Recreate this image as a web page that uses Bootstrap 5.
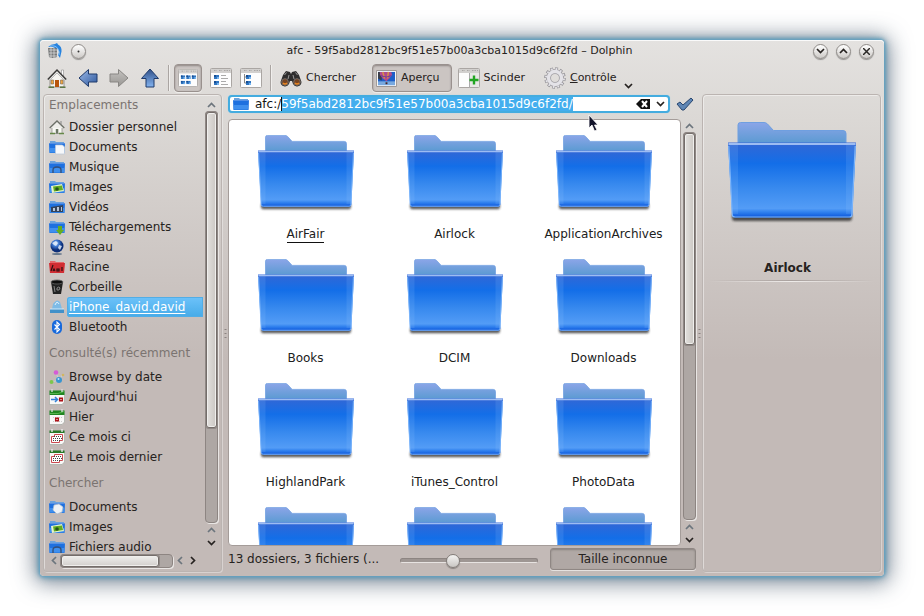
<!DOCTYPE html>
<html lang="fr">
<head>
<meta charset="utf-8">
<meta name="viewport" content="width=device-width, initial-scale=1">
<title>afc - 59f5abd2812bc9f51e57b00a3cba1015d9c6f2fd – Dolphin</title>
<link href="https://cdn.jsdelivr.net/npm/bootstrap@5.3.0/dist/css/bootstrap.min.css" rel="stylesheet">
<style>
:root{--ink:#262220;--soft:#7b7471}
body{font-family:"DejaVu Sans",sans-serif;font-size:12px;line-height:20px;color:var(--ink);background:#fff}
button{font:inherit;color:inherit;background:none;border:0;padding:0}
svg{display:block;flex:none}
.desk{padding:40px}
.win{background:linear-gradient(#e4e2e0,#dbd8d5 80px,#c3bab7 320px);border-radius:4px;padding:0 3px 4px;
 box-shadow:inset 0 1px #fafafa,0 0 3px 1px #62a4c4,0 0 7px 1px rgba(60,130,165,.8),0 2px 22px 5px rgba(45,65,85,.62)}
.stage{flex:1 1 0;min-height:0}
.center{flex:1 1 0;min-width:0}
.titlebar{height:22px;padding:0 7px 0 4px;flex:none;gap:8px}
.orb{width:15px;height:15px;border-radius:50%;border:1px solid #8f8b88;background:linear-gradient(#fff,#cdcac7);box-shadow:0 1px 1px rgba(0,0,0,.35)}
.orb svg{margin:auto}
.caption{font-size:11px;padding-left:20px}
.tools{height:32px;font-size:11px;padding-left:4px;flex:none}
.moves{gap:11px}
.tool{height:28px;border:1px solid transparent;border-radius:4px;padding:0 3px;gap:4px}
.tool.on{background:#cbc5c2;border-color:#99918e;box-shadow:inset 0 1px 2px #8f8784,0 1px #efedeb}
.tool.preview{padding-right:11px;margin:0 2px 0 12px}
.tool.control{margin-left:11px}
.more{margin:0 0 2px 4px}
.split{width:2px;height:26px;border-left:1px solid #aaa5a2;border-right:1px solid #f0eeec;margin:0 4px}
.pane{border:1px solid #bbb4b1;border-radius:4px;box-shadow:inset 1px 1px rgba(255,255,255,.45),1px 1px rgba(255,255,255,.35);flex:none;width:179px}
.grip{width:6px;flex:none;color:#8b8481}
.head{color:var(--soft);font-size:12px;font-weight:400;line-height:20px;padding:6px 0 4px;margin:0}
.head.first{padding:0 0 2px}
.place{height:20px;color:inherit;text-decoration:none;white-space:nowrap}
.place span{flex:1;padding-left:2px;margin-left:2px}
.place.on span{color:#fff;text-decoration:underline;text-underline-offset:2px;background:linear-gradient(#6dc2fa,#46abe8);box-shadow:inset 0 0 0 1px #52ade5;border-radius:3px 0 0 3px}
.listing{padding-left:5px}
.vbar{width:13px;flex:none;margin-left:2px}
.vbar.inset{padding:3px 0 4px;margin-right:3px}
.vbar button,.hbar button{width:13px;height:13px;display:grid;place-items:center}
.groove{background:#aea7a4;border:1px solid #8d8582;border-radius:4px;box-shadow:1px 1px #e9e6e4}
.thumb{background:#dcd9d6;border:1px solid #746d6a;border-radius:3px;box-shadow:inset 0 0 0 1px #f0efed,0 0 0 1px #8f8885}
.vbar .thumb{background:linear-gradient(90deg,#e2e0dd,#cbc7c3)}
.hbar .thumb{background:linear-gradient(#efeeec,#d2cfcc)}
.tall{height:77%}.mid{height:55%}.wide{width:88%}
.hbar{height:18px;padding:0 22px 3px 3px}
.hbar .groove{height:14px}
.where{gap:6px;padding:1px 2px 6px 0}
.address{height:18px;background:#fff;border:2px solid #44acdf;border-radius:4px;box-shadow:0 0 1px #81cdf0;padding:0 3px;gap:6px}
.address input{font:inherit;color:#151515;border:0;outline:0;background:none;padding:0;height:14px;line-height:14px;width:100%}
.address input::selection{background:#43aeee;color:#fff}
.view{background:#fff;border:1px solid #a49c99;border-radius:4px;overflow:hidden}
.files{display:grid;grid-template-columns:repeat(3,1fr);grid-auto-rows:124px;padding:15px 2px 0}
.file{display:flex;flex-direction:column;align-items:center;color:#202020;text-decoration:none;gap:14px}
.file span{border-bottom:1px solid transparent;line-height:15px}
.file.cur span{border-color:#111}
.status{height:26px;gap:12px;flex:none}
.status output{width:160px;flex:none}
.zoomer{appearance:none;background:none;flex:1;min-width:0;height:16px;margin:2px 0 0}
.zoomer::-webkit-slider-runnable-track{height:5px;border-radius:3px;background:#9e9693;border:1px solid #8d8582;border-bottom-color:#e7e3e1}
.zoomer::-webkit-slider-thumb{appearance:none;width:14px;height:14px;margin-top:-5px;border-radius:50%;border:1px solid #827c79;background:linear-gradient(#f4f3f2,#c9c6c3);box-shadow:0 1px 1px rgba(0,0,0,.3)}
.space{width:146px;height:22px;flex:none;background:#b0a8a5;border:1px solid #8f8784;border-radius:3px;box-shadow:inset 0 1px 2px #8a827f,0 1px #e5e1df}
.details{padding-top:27px}
.details h1{font-size:12px;line-height:20px;font-weight:700;margin:32px 0 2px;padding-right:8px}
.rule{height:2px;border:0;margin:0 6px;opacity:1;background:linear-gradient(90deg,transparent,#eeebe9 50%,transparent) bottom/100% 1px no-repeat,linear-gradient(90deg,transparent,#aaa29f 50%,transparent) top/100% 1px no-repeat}
.caret{position:absolute;left:51px;top:0;width:1px;height:14px;background:#111}
.pointer{position:absolute;left:588px;top:114px}
</style>
<script src="https://cdn.jsdelivr.net/npm/bootstrap@5.3.0/dist/js/bootstrap.bundle.min.js"></script>
</head>
<body>
<svg width="0" height="0" class="position-absolute" aria-hidden="true">
<defs>
<linearGradient id="gf" x2="0" y2="1"><stop stop-color="#3a6ad8"/><stop offset=".05" stop-color="#2d68d8"/><stop offset=".28" stop-color="#136ee8"/><stop offset=".6" stop-color="#3789ee"/><stop offset=".88" stop-color="#539cf6"/><stop offset=".93" stop-color="#2f80ee"/><stop offset="1" stop-color="#0b55da"/></linearGradient>
<linearGradient id="gb" x2="0" y2="1"><stop stop-color="#8ba5e8"/><stop offset="1" stop-color="#5599cf"/></linearGradient>
<linearGradient id="ga" x2="0" y2="1"><stop stop-color="#2f4f88"/><stop offset="1" stop-color="#84b4f0"/></linearGradient>
<linearGradient id="gh" x2="1" y2="1"><stop stop-color="#9dbbe8"/><stop offset="1" stop-color="#2c569c"/></linearGradient>
<linearGradient id="gg" x2="0" y2="1"><stop stop-color="#c4c2bf"/><stop offset="1" stop-color="#989693"/></linearGradient>
<radialGradient id="globe" cx=".4" cy=".3"><stop stop-color="#b9d8fa"/><stop offset=".5" stop-color="#3a74cc"/><stop offset="1" stop-color="#0c2e78"/></radialGradient>
<filter id="blur" x="-10%" y="-100%" width="120%" height="300%"><feGaussianBlur stdDeviation="1.3"/></filter>
<symbol id="folder" viewBox="0 0 128 104">
 <rect x="4" y="91" width="120" height="8" rx="3" fill="#222" opacity=".75" filter="url(#blur)"/>
 <path d="M10 24V3q0-2.500 2.500-2.500H36q2 0 3.500 1.500l6 6.500H115q3 0 3 3V24z" fill="url(#gb)" stroke="#6f9fe0"/>
 <path d="M0 20.500h128l-3.500 72q0 3-3 3H7q-3 0-3-3z" fill="url(#gf)"/>
 <path d="M1 21h9v71H5zM127 21h-9v71h5z" fill="#9cc9ff" opacity=".15"/>
 <path d="M.5 22h127" stroke="#9dbcf2" stroke-width="2"/><path d="M.8 24l3.500 69q0 2 3 2h114q2.500 0 2.500-2l3.400-69" fill="none" stroke="#7db5fa" stroke-width="1.200"/>
</symbol>
<symbol id="f16" viewBox="0 0 16 16"><path d="M1 5V2h5l1 1h8v3z" fill="#6ba2dc"/><path d="M0 4h16l-.5 10H.5z" fill="#1e70df"/><path d="M.5 9h15l-.3 4.500H.7z" fill="#3f8fee"/><path d="M0 4.500h16" stroke="#5690e4"/></symbol>
<symbol id="home" viewBox="0 0 20 20"><path d="M3 10h14v9H3z" fill="#f6f5f1" stroke="#77736e" stroke-width=".7"/><path d="M14.500 2h2v6h-2z" fill="#fff" stroke="#777" stroke-width=".5"/><path d="M.8 11.500 10 2 19.200 11.500" fill="#e8e8e5" stroke="#3a3938" stroke-width="1.500"/><path d="M3 12l7-7 7 7" fill="#f6f5f1" stroke="#bbb" stroke-width="1"/><path d="M8 12h4v7H8z" fill="#b8550d"/><path d="M4 12h2.500v4H4zM13.500 12H16v4h-2.500z" fill="#f0a640" stroke="#765" stroke-width=".6"/><path d="M1.500 19.300H7M13 19.300h5.500" stroke="#5c7746" stroke-width="1.400"/></symbol>
<symbol id="home2" viewBox="0 0 16 16"><path d="M3 8h10v6.500H3z" fill="#f8f8f4" stroke="#8b8a83" stroke-width=".7"/><path d="M.7 9 8 2l7.300 7" fill="#eeeeea" stroke="#6d7068" stroke-width="1.400"/><path d="M12 2v4" stroke="#888"/><path d="M6.800 10h2.500v4.500H6.800z" fill="#6c7765"/><path d="M1 14.500h5M10 14.500h5" stroke="#668848" stroke-width="1.500"/></symbol>
<symbol id="arr" viewBox="0 0 20 20"><path d="M1 10 10.500 1.500v4.500H19v8h-8.500v4.500z" stroke-linejoin="round"/></symbol>
<symbol id="up" viewBox="0 0 9 6"><path d="M1 5l3.500-3.500L8 5" fill="none" stroke="currentColor" stroke-width="1.700"/></symbol>
<symbol id="dn" viewBox="0 0 9 6"><path d="M1 1l3.500 3.500L8 1" fill="none" stroke="currentColor" stroke-width="1.700"/></symbol>
<symbol id="lt" viewBox="0 0 6 9"><path d="M5 1 1.500 4.500 5 8" fill="none" stroke="currentColor" stroke-width="1.700"/></symbol>
<symbol id="rt" viewBox="0 0 6 9"><path d="M1 1l3.500 3.500L1 8" fill="none" stroke="currentColor" stroke-width="1.700"/></symbol>
<symbol id="pg" viewBox="0 0 22 20"><rect x=".5" y=".5" width="21" height="19" rx="1" fill="#fdfdfd" stroke="#aaa6a3"/><path d="M1 1h20v4H1z" fill="#d2d0ce"/><path d="M4 2.500h3M9 2.500h3M14 2.500h6" stroke="#a9a6a4" stroke-dasharray="1.500 1"/></symbol>
<symbol id="bl" viewBox="0 0 5 4"><path d="M0 0h5v4H0z" fill="#2f75c0"/><path d="M0 0h2v2H0z" fill="#164d93"/><path d="M3 2h2v2H3z" fill="#78b5ee"/></symbol>
<symbol id="cal" viewBox="0 0 16 16"><path d="M.5 2h15v11l-2.500 2.500H.5z" fill="#f8f8f7" stroke="#a5aaa4" stroke-width=".7"/><path d="M.5 1.500h15V6H.5z" fill="#218521"/><path d="M1 4.500q9 1 14-2" stroke="#57b44e" fill="none"/><path d="M3 0v3M13 0v3" stroke="#ddd" stroke-width="1.300"/></symbol>
<symbol id="month" viewBox="0 0 16 16"><path d="M.5 2h15v11l-2.500 2.500H.5z" fill="#f8f8f7" stroke="#a5aaa4" stroke-width=".7"/><path d="M.5 1.500h15V4H.5z" fill="#287928"/><path d="M3 0v3M13 0v3" stroke="#eee" stroke-width="1.300"/><path d="M5.500 5.500h8v6h-3v2h-8v-6h3z" fill="#fff" stroke="#ca4a50"/><path d="M5 7.500h8M4 9.500h9M4 11.500h7" stroke="#444" stroke-dasharray="1 1"/></symbol>
</defs>
</svg>
<div class="desk vh-100">
<main class="win h-100 d-flex flex-column">
 <header class="titlebar d-flex align-items-center">
  <svg width="16" height="16" viewBox="0 0 16 16"><path d="M1 5h9v9q-5 2-8 0z" fill="#77797a"/><path d="M2 7h8M2 10h8M2 13h8M4 5v10M7 5v10" stroke="#e2e2e2" stroke-width=".7"/><path d="M1 4Q4 1 8 1l2-1 1 1.500q4 2 3.500 7L13 15l-2-3 1-3Q11 5 8 5 5 3 1 4z" fill="#2783df"/><path d="M3 3q6-1 8 3 2 3 1 6" fill="none" stroke="#9ed0fa" stroke-width=".8"/></svg>
  <button class="orb d-grid" aria-label="Menu"><svg width="3" height="3"><circle cx="1.500" cy="1.500" r="1" fill="#333"/></svg></button>
  <div class="caption flex-fill text-center">afc - 59f5abd2812bc9f51e57b00a3cba1015d9c6f2fd – Dolphin</div>
  <button class="orb d-grid" aria-label="Réduire"><svg width="9" height="6"><use href="#dn"/></svg></button>
  <button class="orb d-grid" aria-label="Agrandir"><svg width="9" height="6"><use href="#up"/></svg></button>
  <button class="orb d-grid" aria-label="Fermer"><svg width="7" height="7"><path d="M0 0l7 7M7 0 0 7" stroke="#2b2927" stroke-width="1.500"/></svg></button>
 </header>
 <nav class="tools d-flex align-items-center" aria-label="Outils">
  <div class="moves d-flex align-items-center me-1">
   <button aria-label="Accueil"><svg width="20" height="20"><use href="#home"/></svg></button>
   <button aria-label="Précédent"><svg width="20" height="20" fill="url(#gh)" stroke="#1f3a6b"><use href="#arr"/></svg></button>
   <button aria-label="Suivant"><svg width="20" height="20" viewBox="0 0 20 20" fill="url(#gg)" stroke="#888683"><path d="M19 10 9.500 1.500v4.500H1v8h8.500v4.500z" stroke-linejoin="round"/></svg></button>
   <button aria-label="Parent"><svg width="20" height="20" viewBox="0 0 20 20" fill="url(#ga)" stroke="#1f3a6b"><path d="M10 1l8.500 9.500H14V19H6v-8.500H1.500z" stroke-linejoin="round"/></svg></button>
  </div>
  <div class="split"></div>
  <button class="tool on" aria-label="Icônes"><svg width="20" height="20" viewBox="0 0 22 20"><use href="#pg" width="22" height="20"/><use href="#bl" x="3" y="7" width="5" height="4"/><use href="#bl" x="9" y="7" width="5" height="4"/><use href="#bl" x="15" y="7" width="5" height="4"/><use href="#bl" x="3" y="13" width="5" height="4"/><use href="#bl" x="9" y="13" width="5" height="4"/></svg></button>
  <button class="tool ms-1" aria-label="Détails"><svg width="22" height="20"><use href="#pg"/><use href="#bl" x="4" y="7" width="5" height="4"/><use href="#bl" x="4" y="13" width="5" height="4"/><path d="M11 7.500h5M11 10.500h7M11 13.500h5M11 16.500h7" stroke="#aaa"/></svg></button>
  <button class="tool" aria-label="Colonnes"><svg width="22" height="20"><use href="#pg"/><path d="M4.500 6v9H7M4.500 9H7" fill="none" stroke="#888"/><use href="#bl" x="6" y="7" width="5" height="4"/><use href="#bl" x="6" y="13" width="5" height="4"/></svg></button>
  <div class="split"></div>
  <button class="tool d-flex align-items-center"><svg width="22" height="20" viewBox="0 0 22 20"><path d="M3 7l3-4 4 1 1 2 1-2 4-1 3 4 2.500 7a4.500 4.500 0 0 1-8.500 2l-1-3h-2l-1 3a4.500 4.500 0 0 1-8.500-2z" fill="#2e2d2d"/><path d="M4.500 7l2-2.500M15.500 4.500 17.500 7M9 7l-1 4M13 7l1 4" stroke="#999"/><circle cx="5" cy="14" r="3.300" fill="#744322" stroke="#77706c"/><circle cx="17" cy="14" r="3.300" fill="#744322" stroke="#77706c"/><path d="M3 15q2 2 4 0M15 15q2 2 4 0" stroke="#e7831e" stroke-width="1.500" fill="none"/></svg>Chercher</button>
  <button class="tool on preview d-flex align-items-center"><svg width="21" height="17" viewBox="0 0 22 18"><path d="M.5.500h21v17H.5z" fill="#fff" stroke="#98918e"/><path d="M2 2h18v14H2z" fill="#1d5fc8"/><path d="M2 12h18v4H2z" fill="#78a8df"/><path d="M2 2h4v9l-4-2z" fill="#3a3f4a"/><path d="M4 2h12l1 3-3 4-3 3-4-3-3-4z" fill="#b14a8c"/><path d="M7 2l2 7M13 2l-1 7" stroke="#dc9442" stroke-width="1.500"/><path d="M5 6q6 3 11 0" stroke="#6b3b9a" fill="none"/><path d="M10 13h2v2h-2z" fill="#472326"/></svg>Aperçu</button>
  <button class="tool d-flex align-items-center"><svg width="22" height="20"><use href="#pg"/><path d="M11.500 5v15" stroke="#aaa"/><path d="M12 5h9v14h-9z" fill="#e9e8e6"/><path d="M16 7.500v9M11.500 12h9" stroke="#22a522" stroke-width="2.400"/></svg>Scinder</button>
  <button class="tool control d-flex align-items-center"><svg width="22" height="22" viewBox="0 0 22 22"><circle cx="11" cy="11" r="9" fill="none" stroke="#918f94" stroke-width="3.500" stroke-dasharray="2.700 2"/><circle cx="11" cy="11" r="6.500" fill="none" stroke="#9b999e" stroke-width="5"/><circle cx="11" cy="11" r="6.500" fill="none" stroke="#e4e3e8" stroke-width="3.400"/><circle cx="11" cy="11" r="9" fill="none" stroke="#e4e3e8" stroke-width="2" stroke-dasharray="1.700 3" stroke-dashoffset="-.5"/></svg><span><u>C</u>ontrôle</span><svg width="9" height="6" class="more align-self-end"><use href="#dn"/></svg></button>
 </nav>
 <div class="stage d-flex">
  <aside class="pane d-flex flex-column">
   <div class="stage d-flex">
    <div class="listing flex-fill overflow-hidden">
     <h2 class="head first">Emplacements</h2>
     <a class="place d-flex align-items-center" href="#"><svg width="16" height="16"><use href="#home2"/></svg><span>Dossier personnel</span></a>
     <a class="place d-flex align-items-center" href="#"><svg width="16" height="16"><use href="#f16"/><path d="M6.500 6h7l2 2v7h-9z" fill="#f6f8fb" stroke="#bcc8d9" stroke-width=".7"/></svg><span>Documents</span></a>
     <a class="place d-flex align-items-center" href="#"><svg width="16" height="16"><use href="#f16"/><path d="M4 14v-3q0-3 4-3t4 3v3" fill="none" stroke="#35507a" stroke-width="1.400"/></svg><span>Musique</span></a>
     <a class="place d-flex align-items-center" href="#"><svg width="16" height="16"><use href="#f16"/><path d="M2 7l11-2 2 7-12 2z" fill="#e6f4c9"/><path d="M4 7.500l9-1 1 4.500-9 1.500z" fill="#61ad22"/><circle cx="8" cy="10" r="1.800" fill="#24511c"/></svg><span>Images</span></a>
     <a class="place d-flex align-items-center" href="#"><svg width="16" height="16"><use href="#f16"/><path d="M2 8l12-2v7H2z" fill="#34435b"/><path d="M4 9h2v3H4zM8 8h2v4H8zM12 8h1v4h-1z" fill="#b8c4d6"/></svg><span>Vidéos</span></a>
     <a class="place d-flex align-items-center" href="#"><svg width="16" height="16"><use href="#f16"/><path d="M9 7h4v4h2l-4 5-4-5h2z" fill="#65ad20"/></svg><span>Téléchargements</span></a>
     <a class="place d-flex align-items-center" href="#"><svg width="16" height="16"><ellipse cx="8" cy="15" rx="5" ry="1" fill="#66788d"/><circle cx="8" cy="7" r="6.500" fill="url(#globe)"/><path d="M3 4l4-2 2 2-2 3-2-1zM10 6l3 1-2 4-2-2z" fill="#e5f0fb" opacity=".85"/></svg><span>Réseau</span></a>
     <a class="place d-flex align-items-center" href="#"><svg width="16" height="16"><path d="M1 4V2h5l1 1h8v3z" fill="#e4676a"/><path d="M0 4h16l-1 10H1z" fill="#d12d33"/><path d="M2 12l2-6M4 12l1-2 1 2M8 10v2h2v-2zM13 8v4" stroke="#2b1012" stroke-width="1.200" fill="none"/></svg><span>Racine</span></a>
     <a class="place d-flex align-items-center" href="#"><svg width="16" height="16"><path d="M2 3h12l-2 12H4z" fill="#232323"/><ellipse cx="8" cy="3" rx="6" ry="2" fill="#0d0d0d" stroke="#666" stroke-width=".8"/><path d="M5 7l1 6M8 9q2-2 3 0l-1 2H8z" stroke="#888" fill="none"/></svg><span>Corbeille</span></a>
     <a class="place on d-flex align-items-center" href="#" aria-current="page"><svg width="16" height="16"><path d="M3 10l1-5q4-6 7-2l2 7z" fill="#7dbbe6"/><path d="M1 10h14v4H1z" fill="#4291c9"/><path d="M1 10h14" stroke="#d3ebfa"/><path d="M6 6q2-5 4-1" fill="none" stroke="#def1ff"/></svg><span>iPhone_david.david</span></a>
     <a class="place d-flex align-items-center" href="#"><svg width="16" height="16"><rect x="3" y="1" width="10" height="14" rx="5" fill="#1769dc"/><path d="M5.500 5.500l5 5L8 13V3l2.500 2.500-5 5" fill="none" stroke="#fff" stroke-width="1.100"/></svg><span>Bluetooth</span></a>
     <h2 class="head text-nowrap">Consulté(s) récemment</h2>
     <a class="place d-flex align-items-center" href="#"><svg width="16" height="16"><path d="M3 13l7-2 4-6M10 11 7 4" stroke="#c5d0d5" fill="none"/><circle cx="7" cy="3.500" r="2.300" fill="#d55bd6"/><circle cx="10" cy="11" r="3" fill="#3795d1"/><circle cx="9.500" cy="10" r="1" fill="#b8e4fc"/><circle cx="2.500" cy="13" r="2" fill="#7ec64d"/><circle cx="14" cy="6" r="1.300" fill="#d2b662"/></svg><span>Browse by date</span></a>
     <a class="place d-flex align-items-center" href="#"><svg width="16" height="16"><use href="#cal"/><path d="M2 10.500h6M6 8l2.500 2.500L6 13" stroke="#3480d7" stroke-width="1.500" fill="none"/><path d="M10.700 9.200h2.600v2.600h-2.600z" fill="#fff" stroke="#ad1117" stroke-width="1.500"/></svg><span>Aujourd'hui</span></a>
     <a class="place d-flex align-items-center" href="#"><svg width="16" height="16"><use href="#cal"/><path d="M4 8.500h9M4 12.500h9" stroke="#ccc" stroke-dasharray="1 1"/><path d="M6.700 9.200h2.600v2.600H6.700z" fill="#fff" stroke="#ad1117" stroke-width="1.500"/></svg><span>Hier</span></a>
     <a class="place d-flex align-items-center" href="#"><svg width="16" height="16"><use href="#month"/></svg><span>Ce mois ci</span></a>
     <a class="place d-flex align-items-center" href="#"><svg width="16" height="16"><use href="#month"/></svg><span>Le mois dernier</span></a>
     <h2 class="head">Chercher</h2>
     <a class="place d-flex align-items-center" href="#"><svg width="16" height="16"><use href="#f16"/><path d="M5 6l5-1 4 3-1 5-5 2-4-4z" fill="#eef2f6" stroke="#aebbcc" stroke-width=".7"/></svg><span>Documents</span></a>
     <a class="place d-flex align-items-center" href="#"><svg width="16" height="16"><use href="#f16"/><path d="M2 7l11-2 2 7-12 2z" fill="#e6f4c9"/><path d="M4 7.500l9-1 1 4.500-9 1.500z" fill="#61ad22"/><circle cx="8" cy="10" r="1.800" fill="#24511c"/></svg><span>Images</span></a>
     <a class="place d-flex align-items-center" href="#"><svg width="16" height="16"><use href="#f16"/><path d="M4 14v-3q0-3 4-3t4 3v3" fill="none" stroke="#35507a" stroke-width="1.400"/></svg><span>Fichiers audio</span></a>
    </div>
    <div class="vbar inset d-flex flex-column">
     <button aria-label="Monter" class="text-secondary"><svg width="9" height="6"><use href="#up"/></svg></button>
     <div class="groove flex-fill"><div class="thumb tall"></div></div>
     <button aria-label="Monter" class="text-secondary"><svg width="9" height="6"><use href="#up"/></svg></button>
     <button aria-label="Descendre"><svg width="9" height="6"><use href="#dn"/></svg></button>
    </div>
   </div>
   <div class="hbar d-flex align-items-center">
    <button aria-label="Gauche" class="text-secondary"><svg width="6" height="9"><use href="#lt"/></svg></button>
    <div class="groove flex-fill d-flex"><div class="thumb wide"></div></div>
    <button aria-label="Gauche" class="text-secondary"><svg width="6" height="9"><use href="#lt"/></svg></button>
    <button aria-label="Droite"><svg width="6" height="9"><use href="#rt"/></svg></button>
   </div>
  </aside>
  <div class="grip d-grid"><svg class="m-auto" width="3" height="10"><path d="M1.500 1v9" stroke="currentColor" stroke-width="2" stroke-dasharray="1 3"/></svg></div>
  <section class="center d-flex flex-column">
   <div class="where d-flex align-items-center">
    <div class="address position-relative flex-fill d-flex align-items-center">
     <svg width="16" height="14" viewBox="0 1 16 14"><use href="#f16" width="16" height="16"/></svg>
     <input id="loc" type="text" aria-label="Emplacement" value="afc:/59f5abd2812bc9f51e57b00a3cba1015d9c6f2fd/">
     <i class="caret"></i>
     <button aria-label="Effacer"><svg width="14" height="10" viewBox="0 0 14 10"><path d="M5 0h9v10H5L0 5z" fill="#111"/><path d="M6 2l5 6M11 2 6 8" stroke="#fff" stroke-width="2"/></svg></button>
     <button aria-label="Historique"><svg width="9" height="6"><use href="#dn"/></svg></button>
    </div>
    <button aria-label="Valider"><svg width="18" height="14" viewBox="0 0 18 14"><path d="M1 7l3-2 3 3 8-7 2 2-9 10H6z" fill="#5f86b5" stroke="#28466f" stroke-linejoin="round"/></svg></button>
   </div>
   <div class="stage d-flex">
    <div class="view flex-fill">
     <div class="files">
      <a class="file cur" href="#"><svg width="96" height="78"><use href="#folder"/></svg><span>AirFair</span></a>
      <a class="file" href="#"><svg width="96" height="78"><use href="#folder"/></svg><span>Airlock</span></a>
      <a class="file" href="#"><svg width="96" height="78"><use href="#folder"/></svg><span>ApplicationArchives</span></a>
      <a class="file" href="#"><svg width="96" height="78"><use href="#folder"/></svg><span>Books</span></a>
      <a class="file" href="#"><svg width="96" height="78"><use href="#folder"/></svg><span>DCIM</span></a>
      <a class="file" href="#"><svg width="96" height="78"><use href="#folder"/></svg><span>Downloads</span></a>
      <a class="file" href="#"><svg width="96" height="78"><use href="#folder"/></svg><span>HighlandPark</span></a>
      <a class="file" href="#"><svg width="96" height="78"><use href="#folder"/></svg><span>iTunes_Control</span></a>
      <a class="file" href="#"><svg width="96" height="78"><use href="#folder"/></svg><span>PhotoData</span></a>
      <a class="file" href="#" aria-label="Dossier"><svg width="96" height="78"><use href="#folder"/></svg></a>
      <a class="file" href="#" aria-label="Dossier"><svg width="96" height="78"><use href="#folder"/></svg></a>
      <a class="file" href="#" aria-label="Dossier"><svg width="96" height="78"><use href="#folder"/></svg></a>
     </div>
    </div>
    <div class="vbar d-flex flex-column">
     <button aria-label="Monter" class="text-secondary"><svg width="9" height="6"><use href="#up"/></svg></button>
     <div class="groove flex-fill"><div class="thumb mid"></div></div>
     <button aria-label="Monter" class="text-secondary"><svg width="9" height="6"><use href="#up"/></svg></button>
     <button aria-label="Descendre"><svg width="9" height="6"><use href="#dn"/></svg></button>
    </div>
   </div>
   <div class="status d-flex align-items-center">
    <output class="text-nowrap">13 dossiers, 3 fichiers (...</output>
    <input class="zoomer" type="range" aria-label="Zoom" min="0" max="100" value="37">
    <button class="space">Taille inconnue</button>
   </div>
  </section>
  <div class="grip d-grid"><svg class="m-auto" width="3" height="10"><path d="M1.500 1v9" stroke="currentColor" stroke-width="2" stroke-dasharray="1 3"/></svg></div>
  <aside class="pane details">
   <svg class="mx-auto" width="128" height="104"><use href="#folder"/></svg>
   <h1 class="text-center">Airlock</h1>
   <hr class="rule">
  </aside>
 </div>
</main>
</div>
<svg class="pointer" width="11" height="18" viewBox="0 0 11 18"><path d="M1 1v13l3-3 2.500 6L9 16l-2.500-5H10z" fill="#14152c" stroke="#fff" stroke-width=".8"/></svg>
<script>
const loc=document.getElementById('loc');
loc.focus();
loc.setSelectionRange(5,loc.value.length);
loc.scrollLeft=0;
</script>
</body>
</html>
